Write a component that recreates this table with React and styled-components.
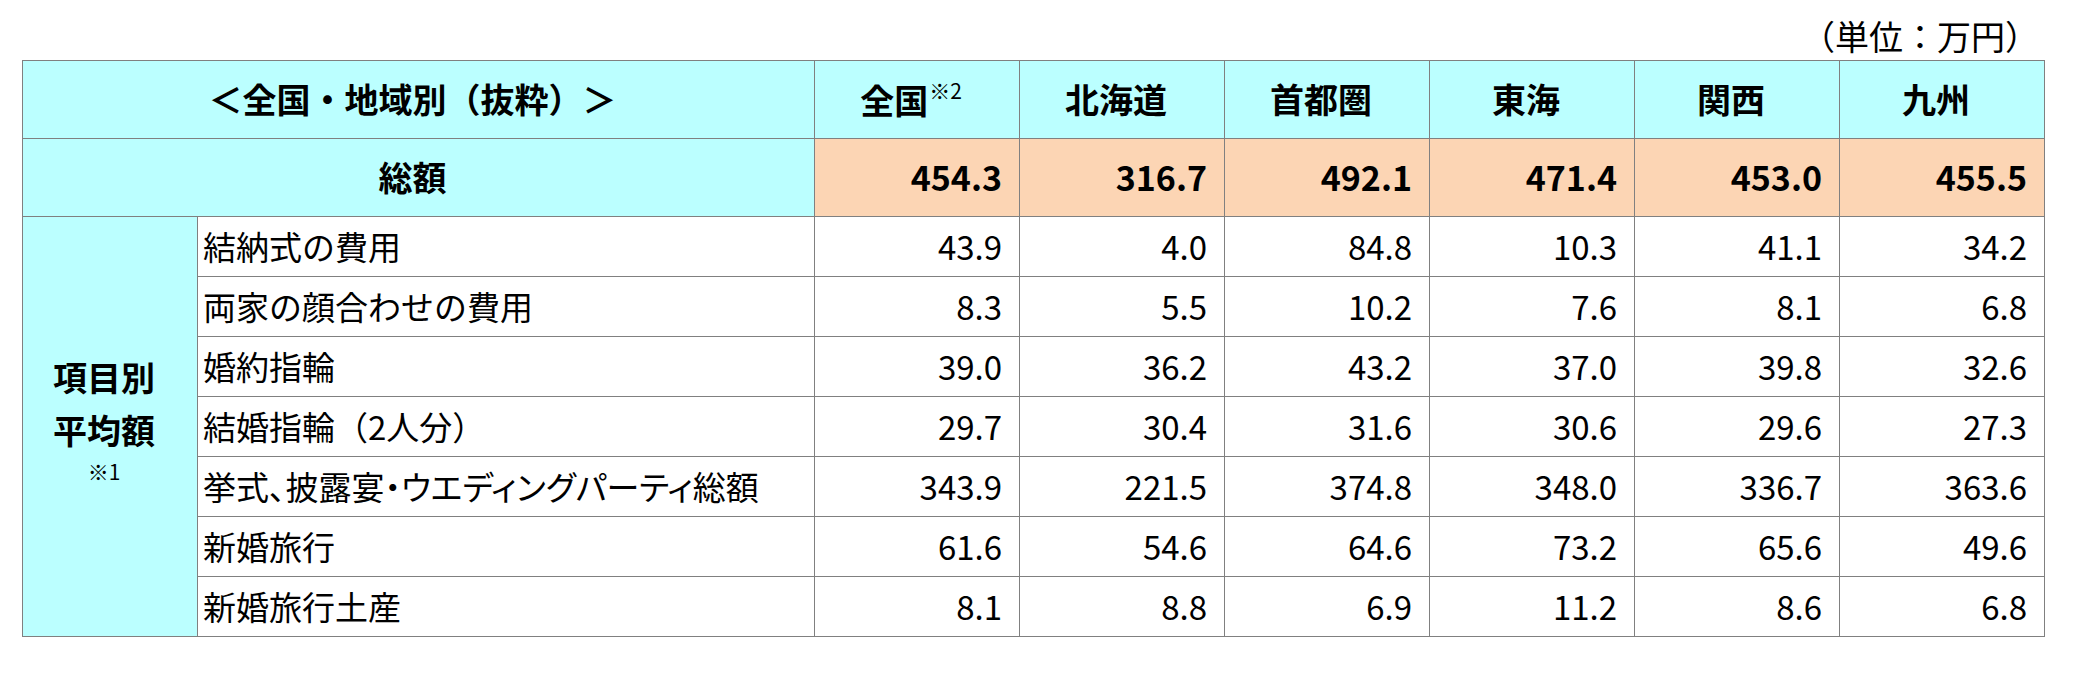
import React from "react";
import styled, { createGlobalStyle } from "styled-components";

const GlobalStyle = createGlobalStyle`
    body {
        margin: 0;
        background: #fff;
        font-family: "Noto Sans CJK JP", "Noto Sans", sans-serif;
        color: #000;
    }
`;

const Page = styled.div`
    padding-left: 22px;
    width: 2023px;
`;

const Unit = styled.div`
    height: 60px;
    display: flex;
    align-items: center;
    justify-content: flex-end;
    padding-top: 10px;
    padding-right: 6px;
    box-sizing: border-box;
    font-size: 34px;
`;

const Table = styled.table`
    width: 2023px;
    table-layout: fixed;
    border-collapse: collapse;
    font-size: 33px;
`;

const Cell = styled.td`
    border: 1px solid #808080;
    padding: 0 17px 0 5px;
    height: ${p => (p.$tall ? "77px" : "59px")};
    background: ${p => (p.$bg === "cyan" ? "#bbffff" : p.$bg === "peach" ? "#fcd5b4" : "#fff")};
    text-align: ${p => p.$align || "right"};
    font-weight: ${p => (p.$bold ? 700 : 400)};
    font-size: ${p => (p.$bold ? "34px" : "33px")};
    font-feature-settings: ${p => (p.$tight ? '"palt"' : "normal")};
    white-space: nowrap;
    vertical-align: middle;
    line-height: 1.2;
`;

const Sup = styled.span`
    font-size: 21px;
    font-weight: 400;
    vertical-align: 15px;
    margin-left: 1px;
`;

const Side = styled.div`
    display: flex;
    flex-direction: column;
    align-items: center;
    line-height: 53px;
    margin-top: -18px;
`;

const Note = styled.span`
    font-size: 21px;
    font-weight: 400;
    line-height: 30px;
`;

const regions = ["全国", "北海道", "首都圏", "東海", "関西", "九州"];
const totals = ["454.3", "316.7", "492.1", "471.4", "453.0", "455.5"];

const items = [
    { label: "結納式の費用", values: ["43.9", "4.0", "84.8", "10.3", "41.1", "34.2"] },
    { label: "両家の顔合わせの費用", values: ["8.3", "5.5", "10.2", "7.6", "8.1", "6.8"] },
    { label: "婚約指輪", values: ["39.0", "36.2", "43.2", "37.0", "39.8", "32.6"] },
    { label: "結婚指輪（2人分）", values: ["29.7", "30.4", "31.6", "30.6", "29.6", "27.3"] },
    { label: "挙式、披露宴・ウエディングパーティ総額", values: ["343.9", "221.5", "374.8", "348.0", "336.7", "363.6"], tight: true },
    { label: "新婚旅行", values: ["61.6", "54.6", "64.6", "73.2", "65.6", "49.6"] },
    { label: "新婚旅行土産", values: ["8.1", "8.8", "6.9", "11.2", "8.6", "6.8"] },
];

export default function App() {
    return (
        <Page>
            <GlobalStyle />
            <Unit>（単位：万円）</Unit>
            <Table>
                <colgroup>
                    <col style={{ width: 175 }} />
                    <col style={{ width: 617 }} />
                    {regions.map(r => <col key={r} style={{ width: 205 }} />)}
                </colgroup>
                <tbody>
                    <tr>
                        <Cell as="th" colSpan={2} $tall $bg="cyan" $bold $align="center">＜全国・地域別（抜粋）＞</Cell>
                        {regions.map((r, i) => (
                            <Cell as="th" key={r} $tall $bg="cyan" $bold $align="center">
                                {r}{i === 0 && <Sup>※2</Sup>}
                            </Cell>
                        ))}
                    </tr>
                    <tr>
                        <Cell colSpan={2} $tall $bg="cyan" $bold $align="center">総額</Cell>
                        {totals.map((t, i) => (
                            <Cell key={i} $tall $bg="peach" $bold>{t}</Cell>
                        ))}
                    </tr>
                    {items.map((row, i) => (
                        <tr key={row.label}>
                            {i === 0 && (
                                <Cell rowSpan={items.length} $bg="cyan" $bold $align="center">
                                    <Side>
                                        <span>項目別</span>
                                        <span>平均額</span>
                                        <Note>※1</Note>
                                    </Side>
                                </Cell>
                            )}
                            <Cell $align="left" $tight={row.tight}>{row.label}</Cell>
                            {row.values.map((v, j) => (
                                <Cell key={j}>{v}</Cell>
                            ))}
                        </tr>
                    ))}
                </tbody>
            </Table>
        </Page>
    );
}
